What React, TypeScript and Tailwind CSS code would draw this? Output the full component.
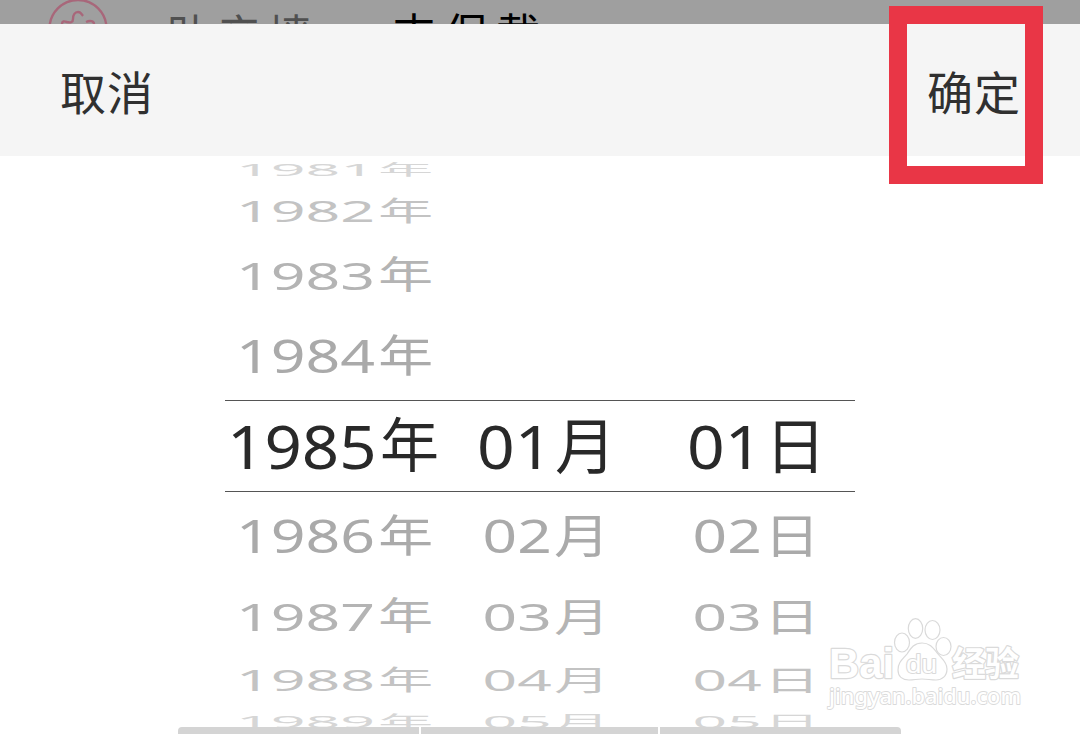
import { clsx } from 'clsx';

interface WheelColumnProps {
  values: (string | null)[];
  unit: string;
  digitsClass: string;
  unitClass: string;
  activeClass: string;
  restClass: string;
}

// Rows get flatter and lighter the further they are from the selected one
const ROWS = [
  { box: 'h-[28px]', text: 'scale-y-[0.26] text-[#d6d6d6]' },
  { box: 'h-[53px]', text: 'scale-y-[0.47] text-[#c3c3c3]' },
  { box: 'h-[75px]', text: 'scale-y-[0.64] text-[#b4b4b4]' },
  { box: 'h-[88px]', text: 'scale-y-[0.76] text-[#aaaaaa]' },
  { box: 'h-[92px] border-y border-[#555555]', text: 'text-[#292929]' },
  { box: 'h-[87px]', text: 'scale-y-[0.76] text-[#aaaaaa]' },
  { box: 'h-[74px]', text: 'scale-y-[0.64] text-[#b4b4b4]' },
  { box: 'h-[54px]', text: 'scale-y-[0.47] text-[#c3c3c3]' },
  { box: 'h-[29px]', text: 'scale-y-[0.28] text-[#d6d6d6]' },
];

const YEARS = ['1981', '1982', '1983', '1984', '1985', '1986', '1987', '1988', '1989'];
const DAYS = [null, null, null, null, '01', '02', '03', '04', '05'];

const WheelColumn = ({ values, unit, digitsClass, unitClass, activeClass, restClass }: WheelColumnProps) => {
  return (
    <div className="w-[210px] shrink-0">
      {values.map((value, i) => (
        <div key={i} className={clsx('flex items-center', ROWS[i].box)}>
          {value && (
            <div
              className={clsx(
                'flex w-[210px] items-center whitespace-nowrap leading-none',
                ROWS[i].text,
                i === 4 ? activeClass : restClass
              )}
            >
              <span className={clsx('shrink-0 origin-left font-["Noto_Sans",sans-serif] text-[60px]', digitsClass)}>
                {value}
              </span>
              <span className={clsx('shrink-0 font-["Noto_Sans_CJK_SC",sans-serif]', unitClass)}>{unit}</span>
            </div>
          )}
        </div>
      ))}
    </div>
  );
};

const Watermark = () => {
  return (
    <svg className="absolute left-[820px] top-[610px]" width="220" height="110" viewBox="0 0 220 110">
      <g fill="#ffffff" stroke="#dadada" strokeWidth="1.2">
        <ellipse cx="82" cy="32.500" rx="7.500" ry="9.500" />
        <ellipse cx="95.500" cy="18.500" rx="7.200" ry="9.800" />
        <ellipse cx="112.500" cy="20" rx="7.500" ry="9.500" />
        <ellipse cx="123.500" cy="36.500" rx="7.500" ry="9" />
        <path d="M102 33c-8 0-11 5-15 11-4 5-9 8-9 16 0 7 5 10 11 10 5 0 8-1 13-1s9 1 14 1c6 0 11-4 11-11 0-7-5-10-9-15-5-6-8-11-16-11z" />
      </g>
      <g fill="#ffffff" stroke="#dadada" strokeWidth="2.400" strokeLinejoin="round" paintOrder="stroke">
        <text x="9" y="68" fontFamily="Liberation Sans" fontWeight="700" fontSize="43" textLength="65" lengthAdjust="spacingAndGlyphs">
          Bai
        </text>
        <text x="86" y="63" fontFamily="Liberation Sans" fontSize="25" strokeWidth="2" textLength="31" lengthAdjust="spacingAndGlyphs">
          du
        </text>
        <text x="132" y="66" fontFamily="Noto Sans CJK SC" fontWeight="700" fontSize="34" textLength="67">
          经验
        </text>
        <text x="9" y="94" fontFamily="Noto Sans" fontWeight="500" fontSize="22" strokeWidth="1.800" textLength="192" lengthAdjust="spacingAndGlyphs">
          jingyan.baidu.com
        </text>
      </g>
    </svg>
  );
};

const App = () => {
  return (
    <div className="relative h-[734px] w-[1080px] overflow-hidden bg-white font-['Noto_Sans_CJK_SC',sans-serif]">
      {/* Dimmed page behind the sheet */}
      <div className="flex h-6 items-start overflow-hidden bg-[#9f9f9f] text-[44px] leading-[60px] tracking-[7px]">
        <svg className="ml-12 shrink-0" width="60" height="60" viewBox="0 0 60 60" fill="none" stroke="#a8677a" strokeWidth="2.400">
          <circle cx="30" cy="28.500" r="28.500" />
          <path d="M14 24c0-3 2-3 5-2 4 1 6 0 6-3 0-4 2-7 5-7 3 0 4 3 5 4M38 22c4-2 8-1 8 2" />
        </svg>
        <span className="ml-[58px] mt-[3px] w-[226px] shrink-0 text-[#505050]">助产墙</span>
        <span className="mt-[2px] tracking-[8px] text-black">支保载</span>
      </div>

      <div className="flex h-[132px] items-center justify-between bg-[#f5f5f5] pl-[60px] pr-[59px] text-[46px] leading-none tracking-[1px] text-[#303030]">
        <button>取消</button>
        <button>确定</button>
      </div>

      <div className="flex h-[578px] justify-center overflow-hidden">
        <WheelColumn
          values={YEARS}
          unit="年"
          digitsClass="ml-[2px] w-[152px] scale-x-[1.09]"
          unitClass="ml-px text-[59px] -mt-[9px]"
          activeClass="origin-[108px_50%]"
          restClass="scale-x-[0.93] origin-[130px_50%]"
        />
        <WheelColumn
          values={DAYS}
          unit="月"
          digitsClass="ml-[42px] w-[75px] scale-x-110"
          unitClass="ml-[3px] text-[61px] -mt-[7px]"
          activeClass="origin-[108px_50%]"
          restClass="scale-x-[0.915] origin-[108px_50%]"
        />
        <WheelColumn
          values={DAYS}
          unit="日"
          digitsClass="ml-[42px] w-[75px] scale-x-110"
          unitClass="ml-[3px] text-[61px] -mt-[8px]"
          activeClass="origin-[108px_50%]"
          restClass="scale-x-[0.915] origin-[108px_50%]"
        />
      </div>

      <div className="absolute bottom-0 left-[178px] flex h-[7px] w-[723px] gap-[2px] overflow-hidden rounded-t">
        <div className="w-[241px] bg-[#d4d4d4]" />
        <div className="w-[237px] bg-[#d4d4d4]" />
        <div className="flex-1 bg-[#d4d4d4]" />
      </div>

      <Watermark />
      <div className="absolute left-[889px] top-[6px] h-[178px] w-[154px] border-[18px] border-[#e93646]" />
    </div>
  );
};

export default App;
